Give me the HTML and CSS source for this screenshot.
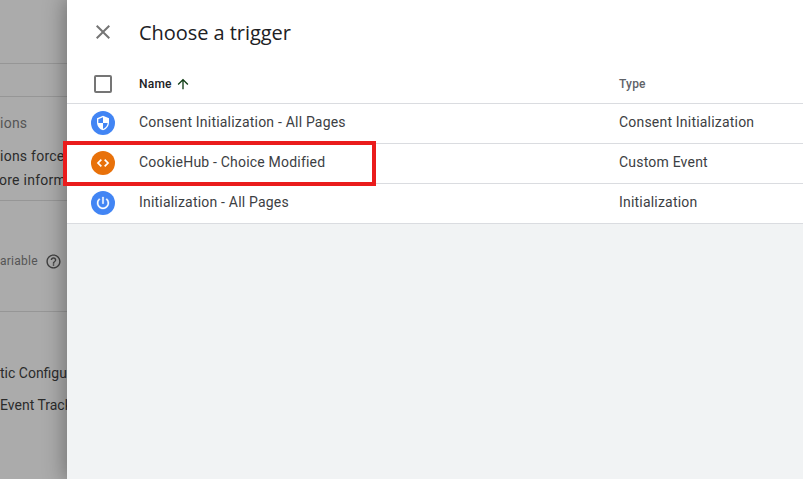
FILE: index.html
```html
<!DOCTYPE html>
<html lang="en">
<head>
<meta charset="utf-8">
<title>Choose a trigger</title>
<link rel="stylesheet" href="styles.css">
</head>
<body>
<div class="page">
  <aside class="backdrop">
    <div class="bd-section bd-s1"></div>
    <div class="bd-section bd-s2"></div>
    <div class="bd-section bd-s3">
      <div class="bd-label">ions</div>
      <div class="bd-text bd-t1">ions force</div>
      <div class="bd-text bd-t2">ore inform</div>
    </div>
    <div class="bd-section bd-s4">
      <div class="bd-var"><span class="bd-label-sm">ariable</span>
        <svg class="bd-help" viewBox="0 0 24 24" width="17" height="17"><path fill="#3f3f3f" d="M11 18h2v-2h-2v2zm1-16C6.48 2 2 6.48 2 12s4.48 10 10 10 10-4.48 10-10S17.52 2 12 2zm0 18c-4.41 0-8-3.59-8-8s3.59-8 8-8 8 3.59 8 8-3.59 8-8 8zm0-14c-2.21 0-4 1.79-4 4h2c0-1.1.9-2 2-2s2 .9 2 2c0 2-3 1.75-3 5h2c0-2.25 3-2.5 3-5 0-2.21-1.79-4-4-4z"/></svg>
      </div>
    </div>
    <div class="bd-section bd-s5">
      <div class="bd-text bd-t3">tic Configur</div>
      <div class="bd-text bd-t4">Event Track</div>
    </div>
  </aside>
  <main class="drawer">
    <header class="drawer-head">
      <svg class="close" viewBox="0 0 24 24" width="24" height="24"><path fill="#757575" d="M19 6.41 17.59 5 12 10.59 6.41 5 5 6.41 10.59 12 5 17.59 6.41 19 12 13.41 17.59 19 19 17.59 13.41 12z"/></svg>
      <h1 class="title">Choose a trigger</h1>
    </header>
    <section class="table">
      <div class="row row-head">
        <div class="cell-icon"><span class="checkbox"></span></div>
        <div class="cell-name name-head">Name
          <svg class="sort" viewBox="0 0 24 24" width="16" height="16"><path fill="#0f3d14" d="M4 12l1.41 1.41L11 7.83V20h2V7.83l5.58 5.59L20 12l-8-8-8 8z"/></svg>
        </div>
        <div class="cell-type type-head">Type</div>
      </div>
      <div class="row">
        <div class="cell-icon"><span class="badge blue">
          <svg viewBox="0 0 24 24" width="16" height="16"><path fill="#fff" d="M12 1 3 5v6c0 5.55 3.84 10.74 9 12 5.16-1.26 9-6.45 9-12V5l-9-4zm0 10.99h7c-.53 4.12-3.28 7.79-7 8.94V12H5V6.3l7-3.11v8.8z"/></svg>
        </span></div>
        <div class="cell-name">Consent Initialization - All Pages</div>
        <div class="cell-type">Consent Initialization</div>
      </div>
      <div class="row">
        <div class="cell-icon"><span class="badge orange">
          <svg viewBox="0 0 24 24" width="16" height="16"><path fill="none" stroke="#fff" stroke-width="2.6" d="M9.5 7 4.5 12l5 5M14.5 7l5 5-5 5"/></svg>
        </span></div>
        <div class="cell-name">CookieHub - Choice Modified</div>
        <div class="cell-type">Custom Event</div>
      </div>
      <div class="row">
        <div class="cell-icon"><span class="badge blue">
          <svg viewBox="0 0 24 24" width="16" height="16"><path fill="#fff" stroke="#fff" stroke-width=".5" d="M13 3h-2v10h2V3zm4.83 2.17-1.42 1.42A6.92 6.92 0 0 1 19 12c0 3.87-3.13 7-7 7s-7-3.13-7-7c0-2.14.96-4.05 2.58-5.42L6.17 5.17A8.93 8.93 0 0 0 3 12c0 4.97 4.03 9 9 9s9-4.03 9-9c0-2.74-1.23-5.18-3.17-6.83z"/></svg>
        </span></div>
        <div class="cell-name">Initialization - All Pages</div>
        <div class="cell-type">Initialization</div>
      </div>
    </section>
    <div class="highlight"></div>
  </main>
</div>
</body>
</html>
```
FILE: styles.css
```css
* { box-sizing: border-box; }
html, body { margin: 0; height: 100%; }
body { overflow: hidden; font-family: Roboto, "Liberation Sans", sans-serif; }

.page { display: flex; width: 803px; height: 479px; overflow: hidden; }

.backdrop { width: 67px; flex: none; background: #ababab; overflow: hidden; color: #2b2b2b; font-size: 14px; letter-spacing: .25px; white-space: nowrap; }
.bd-section { border-bottom: 1px solid #969696; }
.bd-s1 { height: 64px; }
.bd-s2 { height: 33px; }
.bd-s3 { height: 104px; padding-top: 17px; }
.bd-s4 { height: 111px; padding-top: 51px; }
.bd-s5 { border-bottom: 0; padding-top: 52px; }
.bd-label { color: #555; line-height: 18px; }
.bd-t1 { margin-top: 15px; }
.bd-t2 { margin-top: 6px; margin-left: -1px; }
.bd-text { line-height: 18px; }
.bd-t3 { letter-spacing: 0; }
.bd-t4 { margin-top: 14px; letter-spacing: 0; }
.bd-var { display: flex; align-items: center; gap: 7px; color: #555; font-size: 12px; height: 18px; }
.bd-help { flex: none; }

.drawer { position: relative; flex: 1; min-width: 0; background: #f1f3f4; box-shadow: 0 0 20px 2px rgba(0,0,0,.35); }

.drawer-head { display: flex; align-items: center; height: 64px; background: #fff; padding-left: 24px; gap: 24px; }
.close { flex: none; }
.title { margin: 0; font-family: "Open Sans", sans-serif; font-size: 20px; font-weight: 400; letter-spacing: -.05px; color: #202124; }

.table { background: #fff; }
.row { display: flex; align-items: center; height: 40px; padding-bottom: 1px; border-bottom: 1px solid #dadce0; color: #3c4043; font-size: 14px; letter-spacing: .2px; }
.row-head { padding-bottom: 0; }
.cell-icon { width: 72px; flex: none; display: flex; justify-content: center; }
.cell-name { width: 480px; flex: none; display: flex; align-items: center; gap: 3px; padding-bottom: 2px; }
.cell-type { flex: 1; padding-bottom: 2px; }
.name-head { font-size: 12px; font-weight: 500; color: #202124; letter-spacing: .2px; padding-bottom: 0; }
.type-head { font-size: 12px; font-weight: 500; color: #5f6368; letter-spacing: .2px; padding-bottom: 0; }
.checkbox { display: block; width: 18px; height: 18px; border: 2px solid #757575; border-radius: 2px; }
.badge { display: flex; align-items: center; justify-content: center; width: 24px; height: 24px; border-radius: 50%; }
.blue { background: #4285f4; }
.orange { background: #e8710a; }

.highlight { position: absolute; left: -4px; top: 141px; width: 313px; height: 45px; border: 4px solid #ea1c1c; pointer-events: none; }
```
